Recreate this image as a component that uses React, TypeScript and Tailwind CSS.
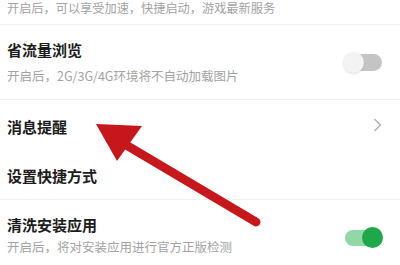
import React from "react";

const font = { fontFamily: '"Noto Sans CJK SC", "Noto Sans", sans-serif' };

export default function App() {
  return (
    <div className="relative w-[400px] h-[265px] overflow-hidden bg-white" style={font}>
      <div className="h-[25px] border-b border-[#f2f2f2] pl-[7px] pt-[1px]">
        <div className="text-[12.2px] leading-[15px] text-[#a3a3a3]">开启后，可以享受加速，快捷启动，游戏最新服务</div>
      </div>
      <div className="h-[75px] border-b border-[#f2f2f2] pl-[7px] pr-[18px] flex items-center justify-between">
        <div className="flex flex-col">
          <div className="text-[15px] leading-[20px] font-semibold text-[#1c1c1c]">省流量浏览</div>
          <div className="mt-[8px] text-[12.5px] leading-[16px] text-[#a3a3a3]">开启后，2G/3G/4G环境将不自动加载图片</div>
        </div>
        <div className="relative w-[39px] h-[20px] flex items-center">
          <div className="absolute left-[10px] right-0 h-[17px] rounded-full bg-[#c4c4c4]" />
          <div className="absolute left-0 w-[21px] h-[21px] rounded-full bg-[#f3f3f3] shadow-[0_1px_2px_rgba(0,0,0,0.12)]" />
        </div>
      </div>
      <div className="h-[53px] pl-[7px] pr-[18px] flex items-center justify-between">
        <div className="text-[15px] leading-[20px] font-semibold text-[#1c1c1c]">消息提醒</div>
        <svg width="9" height="14" viewBox="0 0 9 14" className="mb-[3px]">
          <path d="M1.5 1 L7.5 7 L1.5 13" fill="none" stroke="#b0b0b0" strokeWidth="1.4" />
        </svg>
      </div>
      <div className="h-[47px] border-b border-[#f2f2f2] pl-[7px] flex items-center">
        <div className="text-[15px] leading-[20px] font-semibold text-[#1c1c1c]">设置快捷方式</div>
      </div>
      <div className="h-[65px] pl-[7px] pr-[17px] flex items-center justify-between">
        <div className="flex flex-col mt-[4px]">
          <div className="text-[15px] leading-[20px] font-semibold text-[#1c1c1c]">清洗安装应用</div>
          <div className="mt-[4px] text-[12.5px] leading-[16px] text-[#a3a3a3]">开启后，将对安装应用进行官方正版检测</div>
        </div>
        <div className="relative w-[38px] h-[21px] flex items-center mt-[10px]">
          <div className="absolute left-0 right-[10px] h-[16px] rounded-full bg-[#93d6a8]" />
          <div className="absolute right-0 w-[21px] h-[21px] rounded-full bg-[#1fa84a]" />
        </div>
      </div>
      <svg className="absolute left-0 top-0 pointer-events-none" width="400" height="265" viewBox="0 0 400 265">
        <line x1="116" y1="139" x2="256" y2="222" stroke="#c7171c" strokeWidth="9" strokeLinecap="round" />
        <polygon points="96,124 142,126 117,161" fill="#c7171c" />
      </svg>
    </div>
  );
}
